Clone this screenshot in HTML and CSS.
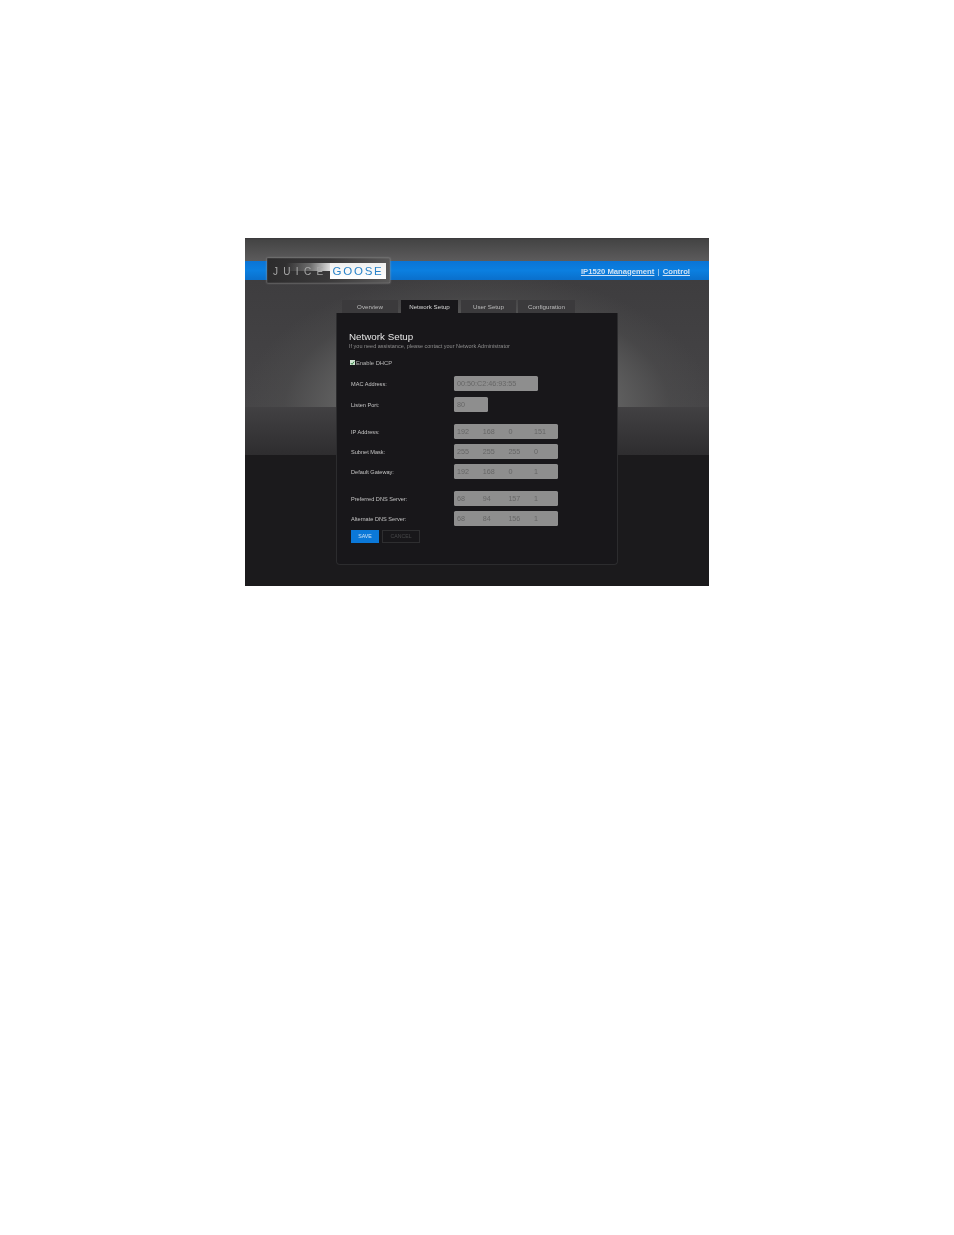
FILE: index.html
```html
<!DOCTYPE html>
<html lang="en">
<head>
<meta charset="utf-8">
<title>Network Setup</title>
<link rel="stylesheet" href="styles.css">
</head>
<body>
<div class="frame">
  <div class="topband"></div>
  <header class="bluebar">
    <div class="logo">
      <span class="juice">JUICE</span>
      <span class="goose">GOOSE</span>
    </div>
    <nav class="toplinks"><a>IP1520 Management</a> <span class="sep">|</span> <a>Control</a></nav>
  </header>
  <div class="content">
    <div class="tabs">
      <div class="tab">Overview</div>
      <div class="tab active">Network Setup</div>
      <div class="tab narrow">User Setup</div>
      <div class="tab wide">Configuration</div>
    </div>
    <main class="panel">
      <h1>Network Setup</h1>
      <p class="sub">If you need assistance, please contact your Network Administrator</p>
      <label class="dhcp"><span class="check"><svg viewBox="0 0 6 6" width="6" height="6"><path d="M1 3l1.5 1.6L5 1.2" fill="none" stroke="#2a7a3a" stroke-width="1.1"/></svg></span>Enable DHCP</label>

      <div class="row first"><span class="lab">MAC Address:</span><div class="field mac">00:50:C2:46:93:55</div></div>
      <div class="row"><span class="lab">Listen Port:</span><div class="field port">80</div></div>

      <div class="row group"><span class="lab">IP Address:</span><div class="field ip"><span>192</span><span>168</span><span>0</span><span>151</span></div></div>
      <div class="row tight"><span class="lab">Subnet Mask:</span><div class="field ip"><span>255</span><span>255</span><span>255</span><span>0</span></div></div>
      <div class="row tight"><span class="lab">Default Gateway:</span><div class="field ip"><span>192</span><span>168</span><span>0</span><span>1</span></div></div>

      <div class="row group"><span class="lab">Preferred DNS Server:</span><div class="field ip"><span>68</span><span>94</span><span>157</span><span>1</span></div></div>
      <div class="row tight"><span class="lab">Alternate DNS Server:</span><div class="field ip"><span>68</span><span>84</span><span>156</span><span>1</span></div></div>

      <div class="buttons">
        <div class="btn save">SAVE</div>
        <div class="btn cancel">CANCEL</div>
      </div>
    </main>
  </div>
</div>
</body>
</html>
```
FILE: styles.css
```css
html, body {
  margin: 0;
  padding: 0;
  background: #fff;
}
body {
  height: 1235px;
  padding: 238px 0 0 245px;
  box-sizing: border-box;
  font-family: "Liberation Sans", Arial, sans-serif;
}
.frame {
  width: 464px;
  height: 348px;
  overflow: hidden;
  filter: blur(0.7px);
  background-color: #1b1a1c;
  background-image:
    linear-gradient(#424143, #2e2d2f),
    radial-gradient(ellipse 235px 135px at 50% 100%, rgba(124,124,124,1) 0%, rgba(114,114,114,1) 40%, rgba(96,96,96,0.85) 62%, rgba(80,80,80,0.4) 82%, rgba(70,70,70,0) 100%),
    linear-gradient(#3e3d3f, #464547);
  background-repeat: no-repeat;
  background-size: 100% 48px, 100% 127px, 100% 127px;
  background-position: 0 169px, 0 42px, 0 42px;
}
.topband {
  height: 23px;
  background: linear-gradient(#39383a 0, #444 8%, #5c5b5c 100%);
}
.bluebar {
  height: 19px;
  display: flex;
  align-items: center;
  justify-content: space-between;
  padding: 0 19px 0 22px;
  background: linear-gradient(#0a74d6, #0b7fe0 50%, #0a6fcb);
}
.logo {
  flex: none;
  width: 123px;
  height: 25px;
  box-sizing: border-box;
  display: flex;
  align-items: center;
  padding: 0 4px;
  background: linear-gradient(100deg, #2c2b2c 0%, #3a393a 50%, #5a5959 100%);
  box-shadow: 0 0 2px #999, inset 0 0 1px #bbb;
}
.juice {
  flex: none;
  width: 59px;
  height: 16px;
  line-height: 18px;
  font-size: 10px;
  letter-spacing: 5.3px;
  color: #a8a8a8;
  padding-left: 2px;
  box-sizing: border-box;
  background: linear-gradient(98deg, rgba(80,80,80,0) 25%, #6a6a6a 65%, #dedede 100%) top/100% 8px no-repeat;
}
.goose {
  flex: none;
  width: 56px;
  height: 16px;
  line-height: 16px;
  text-align: center;
  font-size: 11.5px;
  letter-spacing: 1.8px;
  color: #2a83c8;
  background: linear-gradient(#f0f0f0, #fff);
}
.toplinks {
  font-size: 7.7px;
  font-weight: bold;
  color: #cfe2f5;
  white-space: nowrap;
  padding-top: 1px;
}
.toplinks a {
  text-decoration: underline;
}
.sep {
  font-weight: normal;
  margin: 0 1px;
}
.content {
  width: 282px;
  margin-left: 91px;
  padding-top: 20px;
}
.tabs {
  display: flex;
  gap: 2px;
  padding-left: 6px;
  height: 13px;
}
.tab {
  width: 56px;
  height: 13px;
  line-height: 13px;
  text-align: center;
  font-size: 6.2px;
  color: #bdbdbd;
  background: #3b3a3c;
}
.tab.active {
  width: 57px;
  margin: 0 1px;
  background: #18171a;
  color: #d8d8d8;
}
.tab.narrow {
  width: 55px;
}
.tab.wide {
  width: 57px;
}
.panel {
  height: 252px;
  box-sizing: border-box;
  padding: 18px 15px 0 14px;
  background: #18171a;
  border: 1px solid #2c2c2e;
  border-top: 0;
  border-radius: 0 0 4px 4px;
  color: #c8c8c8;
}
h1 {
  margin: 0 0 0 -2px;
  font-size: 9.8px;
  line-height: 12px;
  font-weight: normal;
  color: #e6e6e6;
}
.sub {
  margin: 0 0 0 -2px;
  font-size: 5.5px;
  line-height: 6px;
  color: #8d8d8d;
  white-space: nowrap;
}
.dhcp {
  display: flex;
  align-items: center;
  gap: 1px;
  margin: 10px 0 0 -1px;
  height: 7px;
  font-size: 5.8px;
  color: #b8b8b8;
}
.check {
  width: 5px;
  height: 5px;
  background: #cfe5d2;
  display: flex;
  align-items: center;
  justify-content: center;
}
.row {
  display: flex;
  align-items: center;
  height: 15px;
  margin-top: 6px;
}
.row.first {
  margin-top: 10px;
}
.row.group {
  margin-top: 12px;
}
.row.tight {
  margin-top: 5px;
}
.lab {
  width: 103px;
  flex: none;
  font-size: 5.6px;
  color: #c4c4c4;
  white-space: nowrap;
}
.field {
  box-sizing: border-box;
  height: 15px;
  line-height: 15px;
  padding-left: 3px;
  background: #8e8e8e;
  border-radius: 1.5px;
  font-size: 7.2px;
  color: #666;
}
.field.mac {
  width: 84px;
}
.field.port {
  width: 34px;
}
.field.ip {
  width: 104px;
  display: grid;
  grid-template-columns: repeat(4, 25.7px);
}
.buttons {
  display: flex;
  gap: 3px;
  margin-top: 4px;
}
.btn {
  box-sizing: border-box;
  height: 13px;
  line-height: 13px;
  text-align: center;
  font-size: 5.2px;
}
.save {
  width: 28px;
  background: #0b78d8;
  color: #cfe2f5;
}
.cancel {
  width: 38px;
  line-height: 11px;
  border: 1px solid #2e2e30;
  color: #48484a;
}
```
